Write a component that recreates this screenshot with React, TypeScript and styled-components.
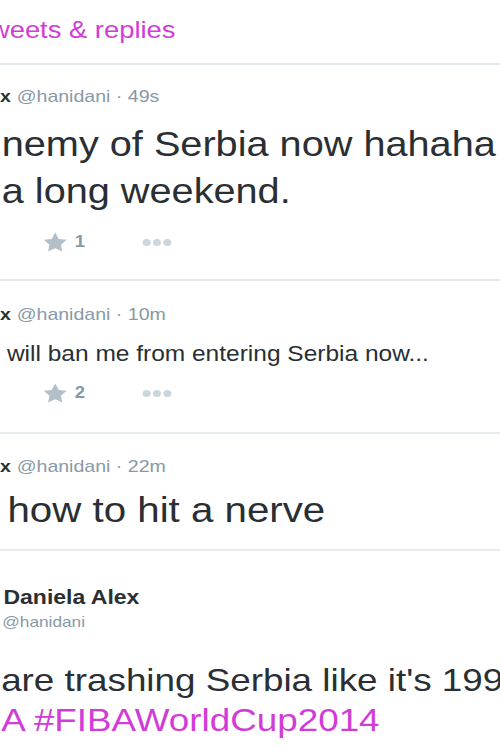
import styled, { createGlobalStyle } from "styled-components";

const GlobalStyle = createGlobalStyle`
  html, body {
    margin: 0;
    padding: 0;
    background: #ffffff;
  }
  body {
    font-family: "Liberation Sans", Arial, sans-serif;
    color: #292f33;
  }
`;

// the screenshot is a bit stretched sideways, so the stream is too
const Viewport = styled.div`
  width: 500px;
  height: 750px;
  overflow: hidden;
  background: #ffffff;
`;

const Stretch = styled.div`
  width: 435px;
  transform: scaleX(1.15);
  transform-origin: 0 0;
`;

const TabBar = styled.div`
  padding: 18px 0 21px;
  white-space: nowrap;
`;

const TabLabel = styled.span`
  display: inline-block;
  margin-left: -22px;
  font-size: 23.8px;
  line-height: 24px;
  color: #d23cd6;
`;

const Tweet = styled.div<{ $top: number; $bottom: number }>`
  border-top: 2px solid #e6ebef;
  padding: ${(p) => p.$top}px 0 ${(p) => p.$bottom}px;
  white-space: nowrap;
`;

const Header = styled.div`
  display: flex;
  align-items: baseline;
  gap: 5px;
  margin-left: -91px;
  font-size: 17px;
  line-height: 22px;
`;

const FullName = styled.span`
  font-weight: bold;
  color: #292f33;
`;

const Meta = styled.span`
  color: #8899a6;
`;

const Text = styled.div<{ $size: number; $line: number; $gap: number; $indent: number }>`
  margin-top: ${(p) => p.$gap}px;
  margin-left: ${(p) => p.$indent}px;
  font-size: ${(p) => p.$size}px;
  line-height: ${(p) => p.$line}px;
  color: #292f33;
`;

const Hashtag = styled.span`
  color: #d23cd6;
`;

const Actions = styled.div<{ $gap: number }>`
  display: flex;
  align-items: center;
  height: 20px;
  margin-top: ${(p) => p.$gap}px;
  padding-left: 37px;
`;

const Fav = styled.div`
  display: flex;
  align-items: center;
  gap: 6px;
  width: 87px;
  color: #8899a6;
  font-size: 16px;
  font-weight: bold;
`;

const More = styled.div`
  display: flex;
  gap: 2px;
`;

const Dot = styled.span`
  width: 7px;
  height: 7px;
  border-radius: 50%;
  background: #ccd6dd;
`;

const Name = styled.div`
  margin-left: 3px;
  font-size: 20px;
  line-height: 24px;
  font-weight: bold;
  color: #292f33;
`;

const Handle = styled.div`
  margin-top: 3px;
  margin-left: 2px;
  font-size: 15px;
  line-height: 20px;
  color: #8899a6;
`;

const Star = () => (
  <svg width="22" height="20" viewBox="0 0 24 22">
    <path
      d="M12 0.6l3.4 7 7.6 1-5.5 5.3 1.3 7.6L12 17.9l-6.8 3.6 1.3-7.6L1 8.6l7.6-1z"
      fill="#b3c0ca"
    />
  </svg>
);

const ActionRow = ({ count, gap }: { count: number; gap: number }) => (
  <Actions $gap={gap}>
    <Fav>
      <Star />
      <span>{count}</span>
    </Fav>
    <More>
      <Dot />
      <Dot />
      <Dot />
    </More>
  </Actions>
);

const TweetHeader = ({ time }: { time: string }) => (
  <Header>
    <FullName>Daniela Alex</FullName>
    <Meta>@hanidani · {time}</Meta>
  </Header>
);

function App() {
  return (
    <Viewport>
      <GlobalStyle />
      <Stretch>
        <TabBar>
          <TabLabel>Tweets &amp; replies</TabLabel>
        </TabBar>

        <Tweet $top={21} $bottom={27}>
          <TweetHeader time="49s" />
          <Text $size={34.5} $line={47} $gap={13} $indent={1.5}>
            nemy of Serbia now hahaha
            <br />
            a long weekend.
          </Text>
          <ActionRow count={1} gap={17} />
        </Tweet>

        <Tweet $top={23} $bottom={29}>
          <TweetHeader time="10m" />
          <Text $size={21.3} $line={26} $gap={15} $indent={6}>
            will ban me from entering Serbia now...
          </Text>
          <ActionRow count={2} gap={16} />
        </Tweet>

        <Tweet $top={22} $bottom={16}>
          <TweetHeader time="22m" />
          <Text $size={35} $line={46} $gap={9} $indent={6.5}>
            how to hit a nerve
          </Text>
        </Tweet>

        <Tweet $top={34} $bottom={20}>
          <Name>Daniela Alex</Name>
          <Handle>@hanidani</Handle>
          <Text $size={32} $line={40} $gap={28} $indent={1}>
            are trashing Serbia like it's 1999
            <br />
            <Hashtag>A #FIBAWorldCup2014</Hashtag>
          </Text>
        </Tweet>
      </Stretch>
    </Viewport>
  );
}

export default App;
